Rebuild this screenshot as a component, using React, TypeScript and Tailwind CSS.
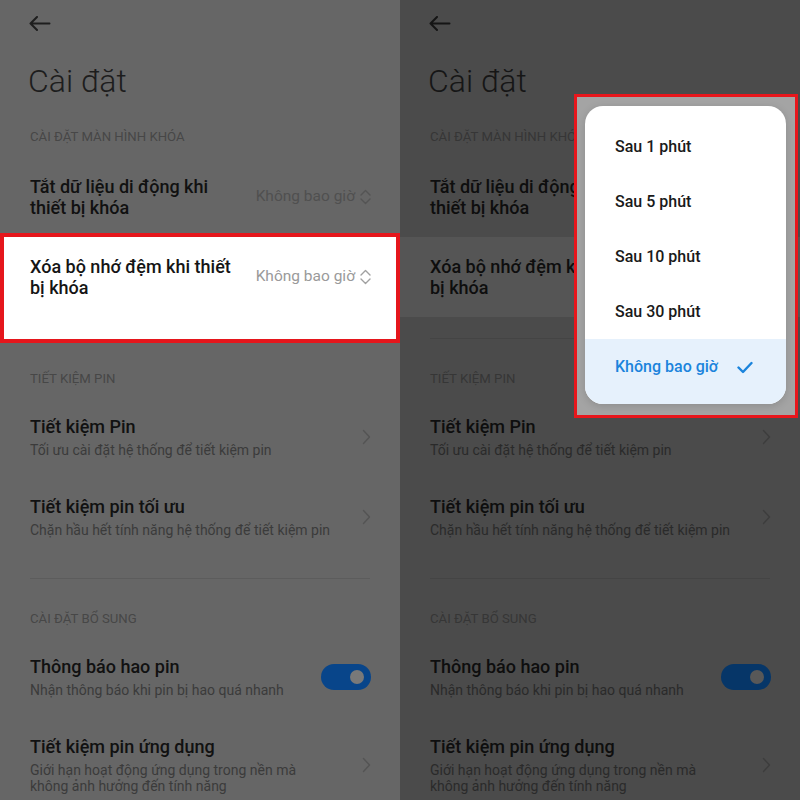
import React from "react";

type Theme = {
  bg: string;
  title: string;
  head: string;
  rowTitle: string;
  sub: string;
  value: string;
  icon: string;
  divider: string;
  toggle: string;
  knob: string;
};

const light: Theme = {
  bg: "bg-[#666666]",
  title: "text-[#1d1d1d]",
  head: "text-[#474747]",
  rowTitle: "text-[#111111]",
  sub: "text-[#3b3b3b]",
  value: "text-[#505050]",
  icon: "#545454",
  divider: "bg-[#5c5c5c]",
  toggle: "bg-[#08458a]",
  knob: "bg-[#797979]",
};

const dark: Theme = {
  bg: "bg-[#4b4b4b]",
  title: "text-[#161616]",
  head: "text-[#363636]",
  rowTitle: "text-[#0e0e0e]",
  sub: "text-[#2a2a2a]",
  value: "text-[#3a3a3a]",
  icon: "#3d3d3d",
  divider: "bg-[#444444]",
  toggle: "bg-[#063668]",
  knob: "bg-[#585858]",
};

const font = { fontFamily: "Roboto, 'Noto Sans', Arial, sans-serif" };

function BackArrow({ c }: { c: string }) {
  return (
    <svg width="22" height="15" viewBox="0 0 22 15" fill="none" stroke={c} strokeWidth="2" strokeLinecap="round" strokeLinejoin="round">
      <path d="M1.5 7.5H20.5M8 1L1.5 7.5L8 14" />
    </svg>
  );
}

function UpDown({ c }: { c: string }) {
  return (
    <svg width="11" height="16" viewBox="0 0 11 16" fill="none" stroke={c} strokeWidth="1.4" strokeLinecap="round" strokeLinejoin="round">
      <path d="M1 6L5.5 1.5L10 6M1 10L5.5 14.5L10 10" />
    </svg>
  );
}

function ChevronRight({ c }: { c: string }) {
  return (
    <svg width="9" height="16" viewBox="0 0 9 16" fill="none" stroke={c} strokeWidth="1.4" strokeLinecap="round" strokeLinejoin="round">
      <path d="M1.5 1.5L7.5 8L1.5 14.5" />
    </svg>
  );
}

function SelectRow({
  t,
  lines,
  white,
  pressed,
}: {
  t: Theme;
  lines: [string, string];
  white?: boolean;
  pressed?: boolean;
}) {
  return (
    <div
      className={`h-[80px] flex items-center ${white ? "pl-[26px] pr-[25px]" : "pl-[30px] pr-[29px]"} ${
        pressed ? "bg-[#555555]" : ""
      }`}
    >
      <div className={`flex-1 text-[18px] leading-[21px] font-medium ${white ? "text-[#151515]" : t.rowTitle}`}>
        {lines[0]}
        <br />
        {lines[1]}
      </div>
      <div className={`flex items-center gap-[5px] text-[15.5px] ${white ? "text-[#9a9a9a]" : t.value}`}>
        <span>Không bao giờ</span>
        <UpDown c={white ? "#a0a0a0" : t.icon} />
      </div>
    </div>
  );
}

function SubRow({
  t,
  title,
  sub,
  right,
}: {
  t: Theme;
  title: string;
  sub: React.ReactNode;
  right: React.ReactNode;
}) {
  return (
    <div className="flex items-center pl-[30px] pr-[29px] pt-[18px] pb-[20px]">
      <div className="flex-1">
        <div className={`text-[18px] leading-[22px] font-medium ${t.rowTitle}`}>{title}</div>
        <div className={`mt-[4px] text-[14px] leading-[16px] ${t.sub}`}>{sub}</div>
      </div>
      {right}
    </div>
  );
}

function Toggle({ t }: { t: Theme }) {
  return (
    <div className={`w-[50px] h-[26px] rounded-full flex items-center justify-end pr-[7px] ${t.toggle}`}>
      <div className={`w-[14px] h-[14px] rounded-full ${t.knob}`} />
    </div>
  );
}

function Popup() {
  const items = ["Sau 1 phút", "Sau 5 phút", "Sau 10 phút", "Sau 30 phút"];
  return (
    <div className="absolute left-[174px] top-[94px] w-[224px] h-[324px] border-[3px] border-[#e8161c] bg-[#a4a4a4] pl-[8px] pt-[9px]">
      <div className="w-[201px] h-[298px] rounded-[18px] bg-white overflow-hidden pt-[13px] shadow-[0_2px_8px_rgba(0,0,0,0.15)]">
        {items.map((s) => (
          <div key={s} className="h-[55px] flex items-center pl-[30px] text-[16px] font-medium text-[#1a1a1a]">
            {s}
          </div>
        ))}
        <div className="h-[66px] pb-[10px] flex items-center pl-[30px] pr-[33px] bg-[#e6f1fc] text-[16px] font-medium text-[#1b84dc]">
          <span className="flex-1">Không bao giờ</span>
          <svg width="16" height="13" viewBox="0 0 16 13" fill="none" stroke="#1b84dc" strokeWidth="2.4" strokeLinecap="round" strokeLinejoin="round">
            <path d="M1.5 6.5L6 11L14.5 2" />
          </svg>
        </div>
      </div>
    </div>
  );
}

function Panel({ isDark }: { isDark: boolean }) {
  const t = isDark ? dark : light;
  return (
    <div className={`relative w-[400px] h-[800px] overflow-hidden ${t.bg}`} style={font}>
      <div className="h-[46px] flex items-center pl-[29px]">
        <BackArrow c={isDark ? "#151515" : "#1e1e1e"} />
      </div>
      <div className="h-[70px] flex items-center pl-[28px]">
        <span className={`text-[32px] leading-[36px] font-light ${t.title}`}>Cài đặt</span>
      </div>
      <div className={`h-[41px] flex items-center pl-[30px] text-[13.2px] ${t.head}`}>CÀI ĐẶT MÀN HÌNH KHÓA</div>

      <SelectRow t={t} lines={["Tắt dữ liệu di động khi", "thiết bị khóa"]} />

      <div className={isDark ? "" : "-mt-[4px] -mb-[4px] border-[4px] border-[#e5161c] bg-white"}>
        <SelectRow t={t} lines={["Xóa bộ nhớ đệm khi thiết", "bị khóa"]} white={!isDark} pressed={isDark} />
        <div className="h-[21px]" />
        <div className={`h-px mx-[30px] ${isDark ? t.divider : "bg-white"}`} />
      </div>

      <div className={`pt-[32px] pb-[11px] pl-[30px] text-[13.2px] leading-[16px] ${t.head}`}>TIẾT KIỆM PIN</div>
      <SubRow t={t} title="Tiết kiệm Pin" sub="Tối ưu cài đặt hệ thống để tiết kiệm pin" right={<ChevronRight c={t.icon} />} />
      <SubRow t={t} title="Tiết kiệm pin tối ưu" sub="Chặn hầu hết tính năng hệ thống để tiết kiệm pin" right={<ChevronRight c={t.icon} />} />
      <div className="h-[20px]" />
      <div className={`h-px mx-[30px] ${t.divider}`} />

      <div className={`pt-[32px] pb-[11px] pl-[30px] text-[13.2px] leading-[16px] ${t.head}`}>CÀI ĐẶT BỔ SUNG</div>
      <SubRow t={t} title="Thông báo hao pin" sub="Nhận thông báo khi pin bị hao quá nhanh" right={<Toggle t={t} />} />
      <SubRow
        t={t}
        title="Tiết kiệm pin ứng dụng"
        sub={
          <>
            Giới hạn hoạt động ứng dụng trong nền mà
            <br />
            không ảnh hưởng đến tính năng
          </>
        }
        right={<ChevronRight c={t.icon} />}
      />

      {isDark && <Popup />}
    </div>
  );
}

export default function App() {
  return (
    <div className="flex w-[800px] h-[800px] overflow-hidden">
      <Panel isDark={false} />
      <Panel isDark={true} />
    </div>
  );
}
